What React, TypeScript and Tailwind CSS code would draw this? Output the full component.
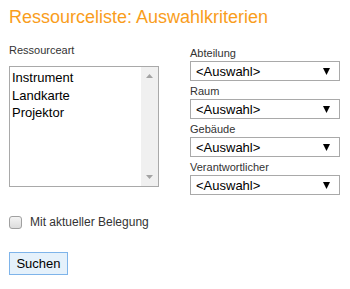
const items = ["Instrument", "Landkarte", "Projektor"];
const filters = ["Abteilung", "Raum", "Gebäude", "Verantwortlicher"];

function Caret({ down }: { down?: boolean }) {
  return (
    <svg width="7" height="4" viewBox="0 0 7 4" className="block">
      <polygon points={down ? "0,0 7,0 3.5,4" : "3.5,0 7,4 0,4"} fill="#a3a3a3" />
    </svg>
  );
}

function Select() {
  return (
    <div className="flex h-[20px] w-[150px] items-center justify-between border border-[#a9a9a9] bg-white pl-[5px] pr-[9px] text-[13px] leading-none text-black">
      <span>&lt;Auswahl&gt;</span>
      <svg width="7" height="7" viewBox="0 0 7 7">
        <polygon points="0,0 7,0 3.5,7" fill="#000" />
      </svg>
    </div>
  );
}

export default function App() {
  return (
    <div className="h-[289px] w-[350px] bg-white pl-[9px] font-['Liberation_Sans',Arial,sans-serif] text-[#333]">
      <h1 className="pt-[7px] text-[18px] leading-[21px] text-[#f99d1c]">
        Ressourceliste: Auswahlkriterien
      </h1>

      <div className="mt-[16px] flex items-start">
        <div className="w-[150px]">
          <div className="text-[11px] leading-[12px]">Ressourceart</div>
          <div className="mt-[10px] flex h-[121px] w-[150px] border border-[#a9a9a9] bg-white">
            <ul className="flex-1 pl-[2px] pt-[2px] text-[13px] leading-[17.5px] text-black">
              {items.map((it) => (
                <li key={it}>{it}</li>
              ))}
            </ul>
            <div className="flex w-[17px] flex-col items-center justify-between bg-[#f0f0f0] py-[7px]">
              <Caret />
              <Caret down />
            </div>
          </div>
        </div>

        <div className="ml-[31px] w-[150px]">
          {filters.map((f, i) => (
            <div key={f} className={i > 0 ? "mt-[4px]" : "mt-[3px]"}>
              <div className="mb-[2px] text-[11px] leading-[12px]">{f}</div>
              <Select />
            </div>
          ))}
        </div>
      </div>

      <label className="mt-[20px] flex items-center">
        <span className="h-[13px] w-[13px] rounded-[3px] border border-[#a0a0a0] bg-gradient-to-b from-[#f4f4f4] to-[#dcdcdc]" />
        <span className="ml-[8px] text-[12px] leading-[14px]">Mit aktueller Belegung</span>
      </label>

      <button className="mt-[23px] flex h-[23px] w-[59px] items-center justify-center border border-[#7eb4ea] bg-[#e5f1fb] text-[13px] text-black">
        Suchen
      </button>
    </div>
  );
}
